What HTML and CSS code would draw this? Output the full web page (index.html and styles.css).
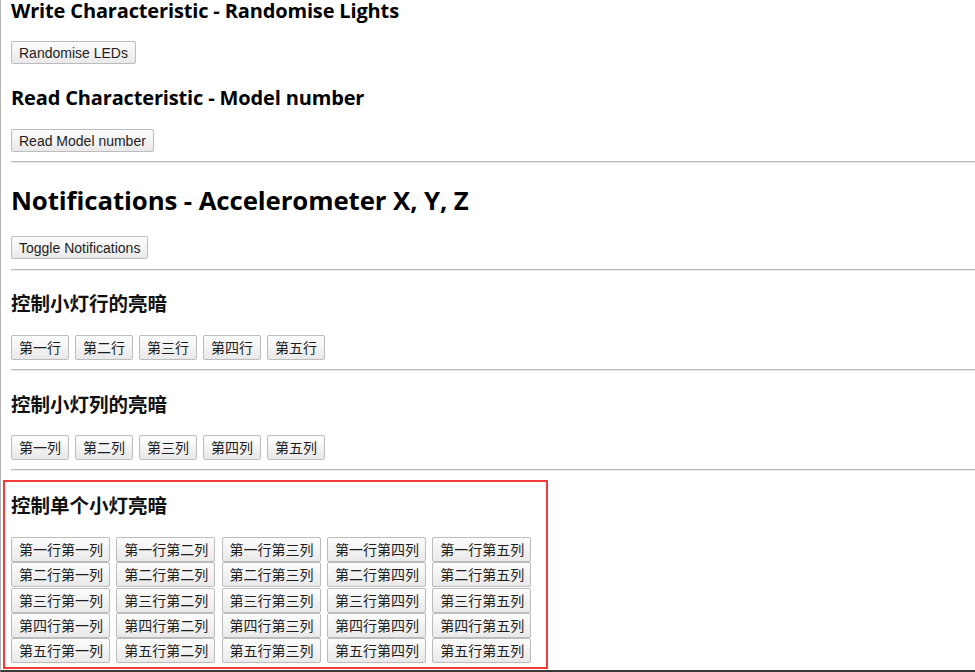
FILE: index.html
```html
<!DOCTYPE html>
<html lang="zh">
<head>
<meta charset="utf-8">
<title>micro:bit BLE</title>
<link rel="stylesheet" href="styles.css">
</head>
<body>
<div class="page">
  <section class="block">
    <h3 class="title t-write">Write Characteristic - Randomise Lights</h3>
    <button class="btn b-write">Randomise LEDs</button>
    <h3 class="title t-read">Read Characteristic - Model number</h3>
    <button class="btn b-read">Read Model number</button>
  </section>
  <hr class="rule r1">
  <section class="block">
    <h1 class="big">Notifications - Accelerometer X, Y, Z</h1>
    <button class="btn b-toggle">Toggle Notifications</button>
  </section>
  <hr class="rule r2">
  <section class="block">
    <h3 class="cn-title t-rows">控制小灯行的亮暗</h3>
    <div class="btn-row row-a">
      <button class="cbtn">第一行</button>
      <button class="cbtn">第二行</button>
      <button class="cbtn">第三行</button>
      <button class="cbtn">第四行</button>
      <button class="cbtn">第五行</button>
    </div>
  </section>
  <hr class="rule r3">
  <section class="block">
    <h3 class="cn-title t-cols">控制小灯列的亮暗</h3>
    <div class="btn-row row-b">
      <button class="cbtn">第一列</button>
      <button class="cbtn">第二列</button>
      <button class="cbtn">第三列</button>
      <button class="cbtn">第四列</button>
      <button class="cbtn">第五列</button>
    </div>
  </section>
  <hr class="rule r4">
  <section class="single">
    <h3 class="cn-title t-single">控制单个小灯亮暗</h3>
    <div class="grid">
      <button class="cbtn">第一行第一列</button>
      <button class="cbtn">第一行第二列</button>
      <button class="cbtn">第一行第三列</button>
      <button class="cbtn">第一行第四列</button>
      <button class="cbtn">第一行第五列</button>
      <button class="cbtn">第二行第一列</button>
      <button class="cbtn">第二行第二列</button>
      <button class="cbtn">第二行第三列</button>
      <button class="cbtn">第二行第四列</button>
      <button class="cbtn">第二行第五列</button>
      <button class="cbtn">第三行第一列</button>
      <button class="cbtn">第三行第二列</button>
      <button class="cbtn">第三行第三列</button>
      <button class="cbtn">第三行第四列</button>
      <button class="cbtn">第三行第五列</button>
      <button class="cbtn">第四行第一列</button>
      <button class="cbtn">第四行第二列</button>
      <button class="cbtn">第四行第三列</button>
      <button class="cbtn">第四行第四列</button>
      <button class="cbtn">第四行第五列</button>
      <button class="cbtn">第五行第一列</button>
      <button class="cbtn">第五行第二列</button>
      <button class="cbtn">第五行第三列</button>
      <button class="cbtn">第五行第四列</button>
      <button class="cbtn">第五行第五列</button>
    </div>
  </section>
</div>
</body>
</html>
```

FILE: styles.css
```css
html, body {
  margin: 0;
  padding: 0;
  background: #ffffff;
}

body {
  width: 975px;
  height: 672px;
  overflow: hidden;
  font-family: "Open Sans", "Noto Sans CJK SC", sans-serif;
  color: #000;
}

.page {
  box-sizing: border-box;
  height: 672px;
  border-left: 1px solid #b4b4b4;
  border-bottom: 2px solid #3a3a3a;
  padding-left: 10px;
  overflow: hidden;
}

.block {
  display: flex;
  flex-direction: column;
  align-items: flex-start;
}

.title {
  margin: 0;
  font-family: "Open Sans", sans-serif;
  font-weight: 700;
  font-size: 20px;
  line-height: 22px;
  letter-spacing: -0.15px;
  color: #000;
}

.t-write { margin-top: 0; }
.b-write { margin-top: 19px; }
.t-read { margin-top: 23px; }
.b-read { margin-top: 20px; }

.big {
  margin: 23px 0 0;
  font-family: "Open Sans", sans-serif;
  font-weight: 700;
  font-size: 25.8px;
  line-height: 28px;
  letter-spacing: -0.1px;
}

.b-toggle { margin-top: 22px; }

.btn {
  box-sizing: border-box;
  height: 23px;
  padding: 0 7px;
  font-family: "Liberation Sans", Arial, sans-serif;
  font-size: 14px;
  color: #1e1e1e;
  background: linear-gradient(#fdfdfd, #e9e9e9);
  border: 1px solid #bcbcbc;
  border-radius: 2px;
  flex-shrink: 0;
}

.rule {
  display: block;
  margin: 0;
  height: 0;
  border: 0;
  border-top: 1px solid #b9b9b9;
  border-bottom: 1px solid #ececec;
}

.r1 { margin-top: 9px; }
.r2 { margin-top: 10px; }
.r3 { margin-top: 9px; }
.r4 { margin-top: 9px; }

.cn-title {
  margin: 0;
  font-family: "Noto Sans CJK SC", sans-serif;
  font-weight: 700;
  font-size: 19.5px;
  line-height: 26px;
  color: #111;
}

.t-rows { margin-top: 19px; }
.t-cols { margin-top: 20px; }

.btn-row {
  display: flex;
  gap: 6px;
}

.row-a { margin-top: 19px; }
.row-b { margin-top: 18px; }

.cbtn {
  box-sizing: border-box;
  height: 25px;
  padding: 0 7px;
  font-family: "Noto Sans CJK SC", sans-serif;
  font-size: 14px;
  line-height: 23px;
  color: #1e1e1e;
  background: linear-gradient(#fdfdfd, #e9e9e9);
  border: 1px solid #bcbcbc;
  border-radius: 2px;
  white-space: nowrap;
  flex-shrink: 0;
}

.single {
  box-sizing: border-box;
  width: 545px;
  margin: 9px 0 0 -8px;
  padding: 0 0 0 6px;
  height: 189px;
  border: 2px solid #f23b3b;
}

.t-single { margin-top: 10px; }

.grid {
  display: grid;
  grid-template-columns: repeat(5, 99px);
  grid-auto-rows: 25px;
  column-gap: 6.3px;
  row-gap: 0.3px;
  margin-top: 19px;
  width: max-content;
}
```
